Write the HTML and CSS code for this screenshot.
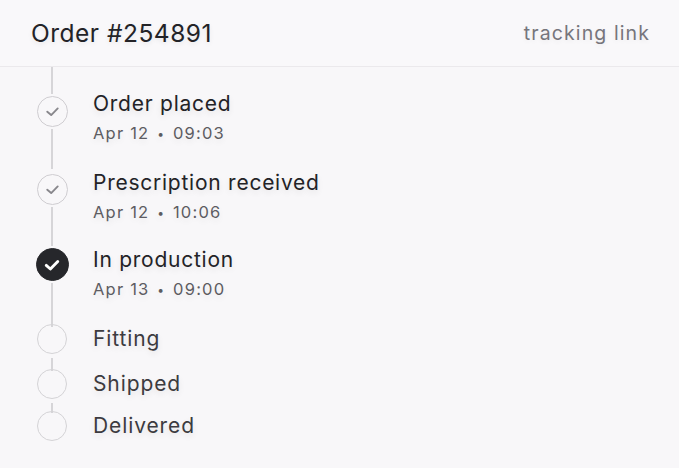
FILE: index.html
```html
<!DOCTYPE html>
<html lang="en">
<head>
<meta charset="utf-8">
<title>Order #254891</title>
<link rel="stylesheet" href="styles.css">
</head>
<body>
<div class="card">
  <header class="head">
    <h1 class="order-id">Order #254891</h1>
    <a class="track" href="#">tracking link</a>
  </header>
  <ol class="timeline">
    <li class="step done first">
      <div class="marker">
        <span class="lead"></span>
        <span class="dot"><svg viewBox="0 0 16 16"><path d="M3.6 8.2 L6.9 11 L12.4 5.4"/></svg></span>
        <span class="line"></span>
      </div>
      <div class="body">
        <div class="title">Order placed</div>
        <div class="time">Apr 12 <span class="sep">•</span> 09:03</div>
      </div>
    </li>
    <li class="step done">
      <div class="marker">
        <span class="dot"><svg viewBox="0 0 16 16"><path d="M3.6 8.2 L6.9 11 L12.4 5.4"/></svg></span>
        <span class="line"></span>
      </div>
      <div class="body">
        <div class="title">Prescription received</div>
        <div class="time">Apr 12 <span class="sep">•</span> 10:06</div>
      </div>
    </li>
    <li class="step current">
      <div class="marker">
        <span class="dot"><svg viewBox="0 0 16 16"><path d="M3.4 8.3 L6.7 11.2 L12.6 5.2"/></svg></span>
        <span class="line"></span>
      </div>
      <div class="body">
        <div class="title">In production</div>
        <div class="time">Apr 13 <span class="sep">•</span> 09:00</div>
      </div>
    </li>
    <li class="step pending">
      <div class="marker">
        <span class="dot"></span>
        <span class="line"></span>
      </div>
      <div class="body">
        <div class="title">Fitting</div>
      </div>
    </li>
    <li class="step pending">
      <div class="marker">
        <span class="dot"></span>
        <span class="line"></span>
      </div>
      <div class="body">
        <div class="title">Shipped</div>
      </div>
    </li>
    <li class="step pending last">
      <div class="marker">
        <span class="dot"></span>
      </div>
      <div class="body">
        <div class="title">Delivered</div>
      </div>
    </li>
  </ol>
</div>
</body>
</html>
```

FILE: styles.css
```css
* { box-sizing: border-box; }

html, body {
  margin: 0;
  padding: 0;
  background: #f8f7f9;
}

body {
  width: 679px;
  height: 468px;
  overflow: hidden;
  font-family: Inter, "Liberation Sans", sans-serif;
  color: #242428;
}

.card {
  display: flex;
  flex-direction: column;
}

.head {
  height: 67px;
  display: flex;
  align-items: center;
  justify-content: space-between;
  padding: 0 29px 0 31px;
  border-bottom: 1px solid #ebe9ec;
  background: #f9f8fa;
}

.order-id {
  margin: 0;
  font-size: 24.5px;
  font-weight: 400;
  color: #232327;
  letter-spacing: 0.5px;
  text-shadow: 0 2px 5px rgba(0, 0, 0, 0.08);
  padding-bottom: 1px;
}

.track {
  font-size: 19.5px;
  color: #76757c;
  text-decoration: none;
  letter-spacing: 1.1px;
  text-shadow: 0 2px 5px rgba(0, 0, 0, 0.06);
}

.timeline {
  list-style: none;
  margin: 0;
  padding: 0 0 0 36px;
}

.step {
  display: flex;
  gap: 25px;
}

.marker {
  width: 32px;
  flex: none;
  display: flex;
  flex-direction: column;
  align-items: center;
}

.lead {
  width: 1.5px;
  height: 27px;
  margin-bottom: 2px;
  background: #d6d5d8;
}

.line {
  flex: 1;
  width: 1.5px;
  margin: 2px 0;
  background: #d6d5d8;
}

.dot {
  width: 31px;
  height: 31px;
  border-radius: 50%;
  border: 1.5px solid #cfcdd1;
  display: flex;
  align-items: center;
  justify-content: center;
  flex: none;
}

.dot svg {
  width: 19px;
  height: 19px;
  flex: none;
  fill: none;
  stroke: #88878c;
  stroke-width: 1.6;
  stroke-linecap: round;
  stroke-linejoin: round;
}

.body {
  display: flex;
  flex-direction: column;
}

.title {
  height: 24px;
  font-size: 21px;
  line-height: 24px;
  letter-spacing: 0.75px;
  color: #232327;
  text-shadow: 0 3px 6px rgba(0, 0, 0, 0.09);
}

.time {
  height: 22px;
  margin-top: 6px;
  font-size: 16.5px;
  line-height: 22px;
  letter-spacing: 1.2px;
  color: #5d5c62;
  text-shadow: 0 3px 6px rgba(0, 0, 0, 0.08);
}

.sep {
  font-size: 12px;
  line-height: 1;
  vertical-align: 1px;
  padding: 0 2px;
}

/* step 1 */
.first .body { padding: 25px 0 27px; }

/* step 2 */
.done:not(.first) .marker { padding-top: 3px; }
.done:not(.first) .body { padding-bottom: 25px; }

/* current step */
.current .marker { padding-top: 0; }
.current .dot {
  width: 33px;
  height: 33px;
  background: #26272b;
  border-color: #26272b;
}
.current .dot svg {
  width: 20px;
  height: 20px;
  stroke: #ffffff;
  stroke-width: 2.3;
}
.current .body { padding-bottom: 27px; }
.current .line { margin-bottom: 0; }

/* pending steps */
.pending .dot {
  width: 30px;
  height: 30px;
  margin-top: -3px;
  border-color: #d4d3d6;
}
.pending .line { margin: 4px 0 1px; }
.pending .body { padding-bottom: 21px; }
.pending .title { color: #3c3b40; letter-spacing: 0.9px; }
.pending + .pending .body { padding-bottom: 18px; }
.pending.last .body { padding-bottom: 0; }
```
